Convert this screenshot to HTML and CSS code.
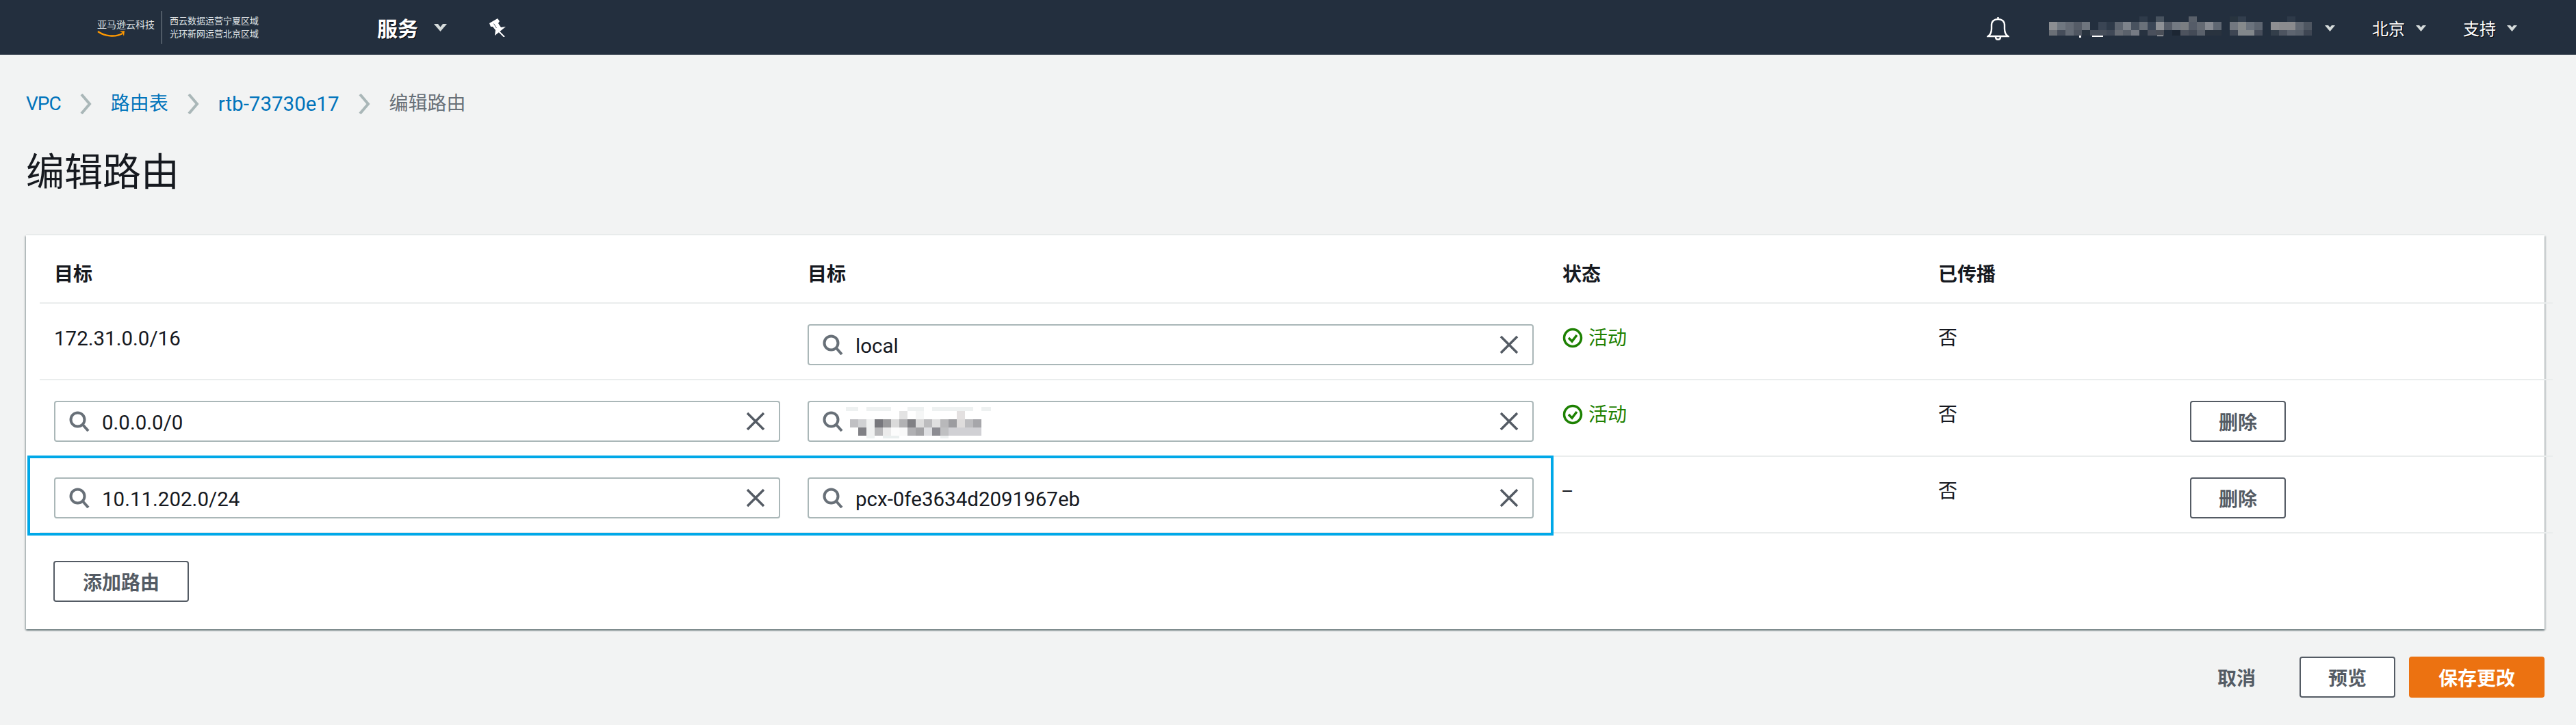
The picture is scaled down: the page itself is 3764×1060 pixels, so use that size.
FILE: index.html
```html
<!DOCTYPE html>
<html lang="zh-CN">
<head>
  <meta charset="UTF-8">
  <meta name="viewport" content="width=device-width, initial-scale=1.0">
  <title>编辑路由</title>
  <link rel="stylesheet" href="styles.css">
</head>
<body>
  <header class="topbar">
    <div class="logo">
      <div class="logo-brand">
        <span>亚马逊云科技</span>
        <svg class="logo-smile" width="42" height="10" viewBox="0 0 42 10">
          <path d="M1 1c10 7 25 9 36 3" fill="none" stroke="#f90" stroke-width="2.4"/>
          <path d="M33 1l7-1-1 8-2-5z" fill="#f90"/>
        </svg>
      </div>
      <div class="logo-regions">
        <span>西云数据运营宁夏区域</span>
        <span>光环新网运营北京区域</span>
      </div>
    </div>

    <div class="services">服务</div>
    <svg class="caret-big" width="19" height="11" viewBox="0 0 19 11"><path d="M0 0h6l3.500 4.500L13 0h6L9.500 11z"/></svg>
    <svg class="pin" width="26" height="28" viewBox="25 11 26 28">
      <path d="M25 19L37 12l3 4-2 3 4 6 7-1-16 13 1-8-4-5-3 0z" fill="#fff"/>
      <path d="M31.500 19.500l4 6.500" stroke="#59626e" stroke-width="1"/>
      <path d="M38 30l9 9" stroke="#fff" stroke-width="2"/>
    </svg>

    <div class="topbar-right">
      <svg class="bell" width="33" height="35" viewBox="0 0 33 35" fill="none" stroke="#fff" stroke-width="2.400">
        <path d="M16.500 1v3"/>
        <path d="M2 29c3-2 5-6 5-11v-5c0-6 4-9 9.500-9s9.500 3 9.500 9v5c0 5 2 9 5 11z"/>
        <path d="M13 30c0 5 7 5 7 0"/>
      </svg>
      <svg class="account-blur" width="400" height="32" viewBox="2984 24 400 32" shape-rendering="crispEdges">
        <rect x="3126" y="24" width="12" height="8" fill="#2f3b4a"/>
        <rect x="3150" y="24" width="12" height="8" fill="#48535f"/>
        <rect x="3198" y="24" width="12" height="8" fill="#59606a"/>
        <rect x="3258" y="24" width="12" height="8" fill="#28343f"/>
        <rect x="3270" y="24" width="12" height="8" fill="#323e4d"/>
        <rect x="3342" y="24" width="12" height="8" fill="#2e3a49"/>
        <rect x="2994" y="32" width="12" height="12" fill="#8b8e92"/>
        <rect x="3006" y="32" width="12" height="12" fill="#6f7780"/>
        <rect x="3018" y="32" width="12" height="12" fill="#646b75"/>
        <rect x="3030" y="32" width="12" height="12" fill="#555c67"/>
        <rect x="3042" y="32" width="12" height="12" fill="#6e757e"/>
        <rect x="3066" y="32" width="12" height="12" fill="#3a4554"/>
        <rect x="3078" y="32" width="12" height="12" fill="#2e3a49"/>
        <rect x="3090" y="32" width="12" height="12" fill="#5d6570"/>
        <rect x="3102" y="32" width="12" height="12" fill="#7d838b"/>
        <rect x="3114" y="32" width="12" height="12" fill="#48525f"/>
        <rect x="3126" y="32" width="12" height="12" fill="#6a717a"/>
        <rect x="3138" y="32" width="12" height="12" fill="#3a4656"/>
        <rect x="3150" y="32" width="12" height="12" fill="#8e9196"/>
        <rect x="3162" y="32" width="12" height="12" fill="#555c68"/>
        <rect x="3174" y="32" width="12" height="12" fill="#737a83"/>
        <rect x="3186" y="32" width="12" height="12" fill="#7a7e82"/>
        <rect x="3198" y="32" width="12" height="12" fill="#555c68"/>
        <rect x="3210" y="32" width="12" height="12" fill="#646a73"/>
        <rect x="3222" y="32" width="12" height="12" fill="#868a91"/>
        <rect x="3234" y="32" width="12" height="12" fill="#5f6772"/>
        <rect x="3258" y="32" width="12" height="12" fill="#727880"/>
        <rect x="3270" y="32" width="12" height="12" fill="#868a8c"/>
        <rect x="3282" y="32" width="12" height="12" fill="#6b737d"/>
        <rect x="3294" y="32" width="12" height="12" fill="#5d6570"/>
        <rect x="3318" y="32" width="12" height="12" fill="#8e8f92"/>
        <rect x="3330" y="32" width="24" height="12" fill="#8a8b8e"/>
        <rect x="3354" y="32" width="12" height="12" fill="#626973"/>
        <rect x="3366" y="32" width="12" height="12" fill="#4e5661"/>
        <rect x="2994" y="44" width="12" height="8" fill="#6a6f76"/>
        <rect x="3006" y="44" width="12" height="8" fill="#454d5a"/>
        <rect x="3018" y="44" width="12" height="8" fill="#646b75"/>
        <rect x="3030" y="44" width="12" height="8" fill="#4f5661"/>
        <rect x="3042" y="44" width="12" height="8" fill="#28333f"/>
        <rect x="3054" y="44" width="24" height="8" fill="#464e5a"/>
        <rect x="3078" y="44" width="12" height="8" fill="#3f4856"/>
        <rect x="3090" y="44" width="12" height="8" fill="#686d75"/>
        <rect x="3102" y="44" width="12" height="8" fill="#5a616b"/>
        <rect x="3114" y="44" width="12" height="8" fill="#767b84"/>
        <rect x="3126" y="44" width="12" height="8" fill="#273240"/>
        <rect x="3138" y="44" width="12" height="8" fill="#4a505c"/>
        <rect x="3150" y="44" width="12" height="8" fill="#4a4f58"/>
        <rect x="3174" y="44" width="12" height="8" fill="#1c2633"/>
        <rect x="3186" y="44" width="12" height="8" fill="#4d535e"/>
        <rect x="3198" y="44" width="12" height="8" fill="#444b57"/>
        <rect x="3210" y="44" width="12" height="8" fill="#5a616b"/>
        <rect x="3222" y="44" width="24" height="8" fill="#29333f"/>
        <rect x="3258" y="44" width="12" height="8" fill="#3e4653"/>
        <rect x="3270" y="44" width="24" height="8" fill="#82878b"/>
        <rect x="3294" y="44" width="12" height="8" fill="#474e5b"/>
        <rect x="3318" y="44" width="12" height="8" fill="#333e4a"/>
        <rect x="3330" y="44" width="12" height="8" fill="#4d5460"/>
        <rect x="3342" y="44" width="12" height="8" fill="#5e6570"/>
        <rect x="3354" y="44" width="12" height="8" fill="#58606b"/>
        <rect x="3366" y="44" width="12" height="8" fill="#3e4653"/>
        <rect x="3038" y="52" width="3" height="3" fill="#fff"/>
        <rect x="3057" y="52" width="16" height="2" fill="#fff"/>
        <rect x="3152" y="52" width="9" height="1" fill="#ddd"/>
      </svg>
      <svg class="caret" width="15" height="9" viewBox="0 0 15 9"><path d="M0 0h5l2.500 3L10 0h5L7.500 9z"/></svg>
      <div class="topbar-item">北京</div>
      <svg class="caret" width="15" height="9" viewBox="0 0 15 9"><path d="M0 0h5l2.500 3L10 0h5L7.500 9z"/></svg>
      <div class="topbar-item">支持</div>
      <svg class="caret" width="15" height="9" viewBox="0 0 15 9"><path d="M0 0h5l2.500 3L10 0h5L7.500 9z"/></svg>
    </div>
  </header>

  <main class="content">
    <nav class="breadcrumb">
      <a class="crumb-short">VPC</a>
      <svg class="crumb-sep" width="17" height="30" viewBox="0 0 17 30"><path d="M2 1l12 14L2 29" fill="none" stroke="#aab7b8" stroke-width="4"/></svg>
      <a>路由表</a>
      <svg class="crumb-sep" width="17" height="30" viewBox="0 0 17 30"><path d="M2 1l12 14L2 29" fill="none" stroke="#aab7b8" stroke-width="4"/></svg>
      <a class="latin">rtb-73730e17</a>
      <svg class="crumb-sep" width="17" height="30" viewBox="0 0 17 30"><path d="M2 1l12 14L2 29" fill="none" stroke="#aab7b8" stroke-width="4"/></svg>
      <span>编辑路由</span>
    </nav>

    <h1 class="page-title">编辑路由</h1>

    <section class="card">
      <div class="row row-head">
        <div class="cell">目标</div>
        <div class="cell">目标</div>
        <div class="cell">状态</div>
        <div class="cell">已传播</div>
        <div class="cell"></div>
      </div>

      <div class="row">
        <div class="cell latin">172.31.0.0/16</div>
        <div class="field">
          <svg class="icon-search" width="30" height="30" viewBox="0 0 30 30"><circle cx="12.500" cy="12.500" r="10"/><path d="M20 20l8 9"/></svg>
          <span class="field-value latin">local</span>
          <svg class="icon-clear" width="28" height="28" viewBox="0 0 28 28"><path d="M2 2l24 24M26 2L2 26"/></svg>
        </div>
        <div class="cell status">
          <svg class="icon-check" width="30" height="30" viewBox="0 0 30 30"><circle cx="15" cy="15" r="12.500"/><path d="M9 15l5 5 7-9"/></svg>
          活动
        </div>
        <div class="cell">否</div>
        <div class="cell"></div>
      </div>

      <div class="row">
        <div class="field">
          <svg class="icon-search" width="30" height="30" viewBox="0 0 30 30"><circle cx="12.500" cy="12.500" r="10"/><path d="M20 20l8 9"/></svg>
          <span class="field-value latin">0.0.0.0/0</span>
          <svg class="icon-clear" width="28" height="28" viewBox="0 0 28 28"><path d="M2 2l24 24M26 2L2 26"/></svg>
        </div>
        <div class="field">
          <svg class="icon-search" width="30" height="30" viewBox="0 0 30 30"><circle cx="12.500" cy="12.500" r="10"/><path d="M20 20l8 9"/></svg>
          <svg class="target-blur" width="212" height="46" viewBox="1236 590 212 46" shape-rendering="crispEdges">
            <rect x="1236" y="590" width="18" height="6" fill="#eef1f1"/>
            <rect x="1266" y="590" width="36" height="6" fill="#eef1f1"/>
            <rect x="1326" y="590" width="24" height="6" fill="#eef1f1"/>
            <rect x="1362" y="590" width="60" height="6" fill="#eef1f1"/>
            <rect x="1434" y="590" width="14" height="6" fill="#eef1f1"/>
            <rect x="1314" y="596" width="12" height="12" fill="#e3e3e3"/>
            <rect x="1338" y="596" width="12" height="12" fill="#f5f6f6"/>
            <rect x="1398" y="596" width="12" height="12" fill="#e3e0e0"/>
            <rect x="1242" y="608" width="12" height="12" fill="#c0c0c3"/>
            <rect x="1254" y="608" width="12" height="12" fill="#d0d1d3"/>
            <rect x="1266" y="608" width="12" height="12" fill="#f0f1f1"/>
            <rect x="1278" y="608" width="12" height="12" fill="#77777c"/>
            <rect x="1290" y="608" width="12" height="12" fill="#9a9a9c"/>
            <rect x="1302" y="608" width="12" height="12" fill="#dadada"/>
            <rect x="1314" y="608" width="12" height="12" fill="#b2b2b4"/>
            <rect x="1326" y="608" width="12" height="12" fill="#808084"/>
            <rect x="1338" y="608" width="12" height="12" fill="#dcdcdc"/>
            <rect x="1350" y="608" width="12" height="12" fill="#bcbcbe"/>
            <rect x="1362" y="608" width="12" height="12" fill="#e0e0e0"/>
            <rect x="1374" y="608" width="12" height="12" fill="#b8b8ba"/>
            <rect x="1386" y="608" width="12" height="12" fill="#9c9ca0"/>
            <rect x="1398" y="608" width="12" height="12" fill="#dedcdc"/>
            <rect x="1410" y="608" width="12" height="12" fill="#bcbcbf"/>
            <rect x="1422" y="608" width="12" height="12" fill="#a6a6aa"/>
            <rect x="1254" y="620" width="12" height="12" fill="#808085"/>
            <rect x="1266" y="620" width="12" height="12" fill="#f0f1f1"/>
            <rect x="1278" y="620" width="12" height="12" fill="#b8b8ba"/>
            <rect x="1290" y="620" width="12" height="12" fill="#ebebeb"/>
            <rect x="1302" y="620" width="12" height="12" fill="#fcfcfc"/>
            <rect x="1314" y="620" width="12" height="12" fill="#f9f9f9"/>
            <rect x="1326" y="620" width="12" height="12" fill="#b0b0b3"/>
            <rect x="1338" y="620" width="12" height="12" fill="#a2a2a5"/>
            <rect x="1350" y="620" width="12" height="12" fill="#dedfe2"/>
            <rect x="1362" y="620" width="12" height="12" fill="#8c8c92"/>
            <rect x="1374" y="620" width="12" height="12" fill="#bfc0c2"/>
            <rect x="1386" y="620" width="48" height="12" fill="#d0d0d4"/>
            <rect x="1266" y="632" width="12" height="4" fill="#eef1f1"/>
            <rect x="1290" y="632" width="24" height="4" fill="#eaefef"/>
            <rect x="1374" y="632" width="12" height="4" fill="#eef1f1"/>
          </svg>
          <svg class="icon-clear" width="28" height="28" viewBox="0 0 28 28"><path d="M2 2l24 24M26 2L2 26"/></svg>
        </div>
        <div class="cell status">
          <svg class="icon-check" width="30" height="30" viewBox="0 0 30 30"><circle cx="15" cy="15" r="12.500"/><path d="M9 15l5 5 7-9"/></svg>
          活动
        </div>
        <div class="cell">否</div>
        <div class="cell-action"><button class="btn">删除</button></div>
      </div>

      <div class="row row-active">
        <div class="field">
          <svg class="icon-search" width="30" height="30" viewBox="0 0 30 30"><circle cx="12.500" cy="12.500" r="10"/><path d="M20 20l8 9"/></svg>
          <span class="field-value latin">10.11.202.0/24</span>
          <svg class="icon-clear" width="28" height="28" viewBox="0 0 28 28"><path d="M2 2l24 24M26 2L2 26"/></svg>
        </div>
        <div class="field">
          <svg class="icon-search" width="30" height="30" viewBox="0 0 30 30"><circle cx="12.500" cy="12.500" r="10"/><path d="M20 20l8 9"/></svg>
          <span class="field-value latin">pcx-0fe3634d2091967eb</span>
          <svg class="icon-clear" width="28" height="28" viewBox="0 0 28 28"><path d="M2 2l24 24M26 2L2 26"/></svg>
        </div>
        <div class="cell cell-dash">–</div>
        <div class="cell">否</div>
        <div class="cell-action"><button class="btn">删除</button></div>
      </div>

      <div class="card-foot">
        <button class="btn btn-wide">添加路由</button>
      </div>
    </section>

    <footer class="actions">
      <button class="btn btn-link">取消</button>
      <button class="btn">预览</button>
      <button class="btn btn-wide btn-primary">保存更改</button>
    </footer>
  </main>
</body>
</html>
```

FILE: styles.css
```css
html, body {
  margin: 0;
  background: #f2f3f3;
  color: #16191f;
  font-family: Roboto, "Noto Sans CJK SC", sans-serif;
  font-size: 28px;
}
svg {
  display: block;
  flex: none;
}
.latin {
  font-size: 29.5px;
}

/* top bar */
.topbar {
  display: flex;
  align-items: center;
  height: 80px;
  padding-left: 142px;
  background: #232f3e;
  color: #fff;
}
.logo {
  display: flex;
  align-items: center;
  width: 409px;
  color: #dfe3e6;
}
.logo-brand {
  display: flex;
  flex-direction: column;
  width: 94px;
  font-size: 14px;
  line-height: 20px;
  white-space: nowrap;
}
.logo-smile {
  margin-top: -1px;
}
.logo-regions {
  display: flex;
  flex-direction: column;
  height: 48px;
  justify-content: center;
  padding-left: 11px;
  border-left: 1px solid #7f8891;
  font-size: 13px;
  line-height: 19px;
  white-space: nowrap;
}
.services {
  width: 83px;
  font-size: 30px;
  font-weight: 700;
  text-shadow: 1px 1px 0 #000;
}
.caret-big path,
.caret path {
  fill: #d5dbdb;
}
.pin {
  margin-left: 62px;
}
.topbar-right {
  display: flex;
  align-items: center;
  margin-left: auto;
  padding-right: 86px;
}
.bell {
  margin-top: 2px;
}
.account-blur {
  margin-left: 48px;
}
.topbar-item {
  font-size: 24px;
  text-shadow: 1px 1px 0 #000;
}
.account-blur + .caret {
  margin: 2px 54px 0 13px;
}
.topbar-item + .caret {
  margin: 2px 0 0 16px;
}
.topbar-item + .caret + .topbar-item {
  margin-left: 54px;
}

/* page */
.content {
  padding: 52px 46px 40px 38px;
}
.breadcrumb {
  display: flex;
  align-items: center;
  gap: 28px;
  line-height: 40px;
  color: #687078;
}
.breadcrumb a {
  color: #0073bb;
}
.crumb-short {
  letter-spacing: -1px;
}
.page-title {
  margin: 48px 0 60px;
  font-size: 56px;
  font-weight: 400;
  line-height: 64px;
}

/* route table */
.card {
  width: 3680px;
  background: #fff;
  box-shadow: 0 2px 2px 0 rgba(0, 28, 36, 0.45), 2px 1px 2px 0 rgba(0, 28, 36, 0.18), -2px 1px 2px 0 rgba(0, 28, 36, 0.18), 0 -2px 0 0 #eaeded;
}
.row {
  display: grid;
  grid-template-columns: 1101px 1103px 549px 368px 1fr;
  box-sizing: border-box;
  height: 112px;
  margin: 0 -12px 0 20px;
  padding-left: 21px;
  border-bottom: 2px solid #eaeded;
}
.row-head {
  height: 100px;
  font-weight: 700;
}
.row-head .cell {
  padding-top: 38px;
}
.row-active {
  position: relative;
}
.row-active::after {
  content: "";
  position: absolute;
  top: -2px;
  left: -18px;
  box-sizing: border-box;
  width: 2230px;
  height: 117px;
  border: 4px solid #00a8e8;
  pointer-events: none;
}
.cell {
  padding-top: 31px;
  line-height: 40px;
}
.cell-dash {
  margin-left: -2px;
}
.status {
  display: flex;
  align-items: flex-start;
  gap: 8px;
  color: #1d8102;
}
.icon-check {
  margin-top: 4px;
  fill: none;
  stroke: #1d8102;
  stroke-width: 3.500;
}
.field {
  display: flex;
  align-items: center;
  box-sizing: border-box;
  width: 1061px;
  height: 60px;
  margin-top: 30px;
  padding: 0 20px;
  background: #fff;
  border: 2px solid #aab7b8;
  border-radius: 4px;
}
.field-value {
  flex: 1;
  margin-left: 18px;
  line-height: 40px;
  padding-top: 4px;
}
.icon-search {
  fill: none;
  stroke: #687078;
  stroke-width: 4;
}
.icon-clear {
  margin-left: auto;
  fill: none;
  stroke: #545b64;
  stroke-width: 3.500;
}
.target-blur {
  margin: 3px 0 0 4px;
}
.cell-action {
  padding-top: 30px;
}

/* buttons */
.btn {
  box-sizing: border-box;
  width: 140px;
  height: 60px;
  padding: 0;
  background: #fff;
  border: 2px solid #545b64;
  border-radius: 4px;
  color: #545b64;
  font: 700 28px Roboto, "Noto Sans CJK SC", sans-serif;
}
.btn-wide {
  width: 198px;
}
.btn-link {
  width: auto;
  padding: 0 44px;
  background: none;
  border: none;
}
.btn-primary {
  background: #ec7211;
  border-color: #ec7211;
  color: #fff;
}
.card-foot {
  padding: 40px 0 40px 40px;
}
.actions {
  display: flex;
  justify-content: flex-end;
  gap: 20px;
  width: 3680px;
  margin-top: 40px;
}
```
